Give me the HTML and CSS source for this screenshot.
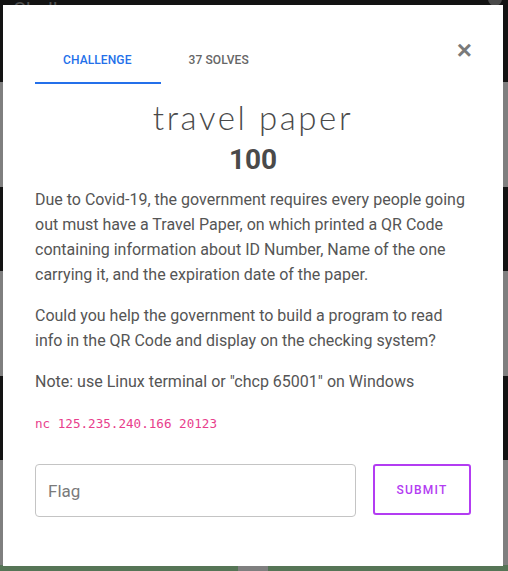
FILE: index.html
```html
<!DOCTYPE html>
<html>
<head>
<meta charset="utf-8">
<link rel="stylesheet" href="styles.css">
</head>
<body>
<div class="page-title">Challenges</div>
<div class="avatar"></div>
<div class="bottom-patch"></div>
<div class="modal">
  <button class="close" aria-label="Close">&times;</button>
  <nav class="tabs">
    <span class="tab active">Challenge</span>
    <span class="tab">37 Solves</span>
  </nav>
  <h2 class="title">travel paper</h2>
  <h3 class="value">100</h3>
  <div class="desc">
    <p>Due to Covid-19, the government requires every people going out must have a Travel Paper, on which printed a QR Code containing information about ID Number, Name of the one carrying it, and the expiration date of the paper.</p>
    <p>Could you help the government to build a program to read info in the QR Code and display on the checking system?</p>
    <p>Note: use Linux terminal or "chcp 65001" on Windows</p>
    <p><code>nc 125.235.240.166 20123</code></p>
  </div>
  <form class="flag-row">
    <input class="flag-input" type="text" placeholder="Flag">
    <button class="submit" type="button">Submit</button>
  </form>
</div>
</body>
</html>
```
FILE: styles.css
```css
html, body {
  margin: 0;
  padding: 0;
}
body {
  width: 508px;
  height: 571px;
  overflow: hidden;
  position: relative;
  font-family: Roboto, "Liberation Sans", sans-serif;
  background: linear-gradient(to bottom,
    #131313 0, #131313 82px,
    #7f7f7f 82px, #7f7f7f 187px,
    #131313 187px, #131313 271px,
    #7f7f7f 271px, #7f7f7f 376px,
    #131313 376px, #131313 460px,
    #7f7f7f 460px, #7f7f7f 565px,
    #567556 565px, #567556 571px);
}
.page-title {
  position: absolute;
  left: 13px;
  top: 0;
  font-size: 20px;
  line-height: 20px;
  color: #505050;
}
.avatar {
  position: absolute;
  left: 488px;
  top: -8px;
  width: 14px;
  height: 14px;
  border-radius: 50%;
  background: #4a4a4a;
}
.bottom-patch {
  position: absolute;
  left: 238px;
  top: 565px;
  width: 30px;
  height: 6px;
  background: #7f7f7f;
}
.modal {
  position: absolute;
  left: 3px;
  top: 5px;
  width: 500px;
  height: 561px;
  box-sizing: border-box;
  background: #fff;
  padding: 32px 32px 0 32px;
  display: flex;
  flex-direction: column;
}
.close {
  position: absolute;
  right: 31px;
  top: 33px;
  border: 0;
  background: none;
  padding: 0;
  font-family: "Liberation Sans", Arial, sans-serif;
  font-size: 26px;
  font-weight: bold;
  line-height: 24px;
  color: #7a7a7a;
}
.tabs {
  display: flex;
}
.tab {
  font-size: 12px;
  font-weight: 500;
  text-transform: uppercase;
  color: #666;
  padding: 15px 28px 14px;
  line-height: 16px;
  border-bottom: 2px solid transparent;
  letter-spacing: 0.1px;
}
.tab.active {
  color: #2470ea;
  border-bottom-color: #2470ea;
  padding-left: 28px;
  padding-right: 29px;
}
.title {
  margin: 13px 0 0;
  text-align: center;
  font-family: Lato, "Open Sans", sans-serif;
  font-weight: 300;
  font-size: 33px;
  line-height: 40px;
  letter-spacing: 2.6px;
  color: #4a4a4a;
}
.value {
  margin: 5px 0 0;
  text-align: center;
  font-size: 28px;
  font-weight: 700;
  line-height: 36px;
  color: #4a4a4a;
}
.desc {
  margin-top: 9px;
  color: #555;
  font-size: 16px;
  line-height: 25px;
}
.desc p {
  margin: 0 0 16px;
}
code {
  font-family: "DejaVu Sans Mono", monospace;
  font-size: 12.6px;
  color: #e83e8c;
}
.flag-row {
  display: flex;
  gap: 17px;
  margin-top: 12px;
}
.flag-input {
  flex: 1;
  height: 53px;
  box-sizing: border-box;
  border: 1px solid #c4c4c4;
  border-radius: 4px;
  padding: 0 12px;
  font-family: Roboto, sans-serif;
  font-size: 17px;
  color: #555;
}
.flag-input::placeholder {
  color: #7a7a7a;
}
.submit {
  width: 98px;
  height: 51px;
  box-sizing: border-box;
  background: #fff;
  border: 2px solid #b33cf2;
  border-radius: 3px;
  font-family: Roboto, sans-serif;
  font-size: 12px;
  font-weight: 500;
  letter-spacing: 1.2px;
  text-transform: uppercase;
  color: #b33cf2;
}
```
